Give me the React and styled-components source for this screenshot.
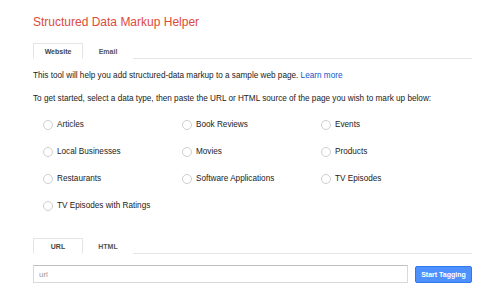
import React, { useState } from "react";
import styled, { createGlobalStyle } from "styled-components";

const GlobalStyle = createGlobalStyle`
  html, body {
    margin: 0;
    padding: 0;
    background: #fff;
  }
  body {
    font-family: "Liberation Sans", Arial, sans-serif;
    color: #222;
  }
`;

const Page = styled.div`
  width: 500px;
  height: 302px;
  box-sizing: border-box;
  padding: 13px 28px 0 33px;
  overflow: hidden;
`;

const Title = styled.h1`
  margin: 0;
  font-size: 12px;
  font-weight: 400;
  line-height: 18px;
  color: #dd4b39;
`;

const TabBar = styled.div`
  display: flex;
  border-bottom: 1px solid #e5e5e5;
  margin-top: ${p => p.$top}px;
`;

const Tab = styled.div`
  width: 50px;
  height: 16px;
  box-sizing: border-box;
  margin-bottom: -1px;
  display: flex;
  align-items: center;
  justify-content: center;
  font-size: 7px;
  font-weight: 700;
  color: ${p => (p.$active ? "#444" : "#555")};
  background: #fff;
  border: 1px solid ${p => (p.$active ? "#e5e5e5" : "transparent")};
  border-bottom-color: ${p => (p.$active ? "#fff" : "transparent")};
  cursor: pointer;
`;

const Para = styled.p`
  margin: ${p => p.$top}px 0 0;
  font-size: 8.2px;
  line-height: 11px;
`;

const Link = styled.a`
  color: #1155cc;
  text-decoration: none;
`;

const Grid = styled.div`
  display: grid;
  grid-template-columns: 139px 139px 1fr;
  row-gap: 16px;
  margin: 15px 0 0 10px;
`;

const Option = styled.label`
  display: flex;
  align-items: center;
  gap: 4px;
  font-size: 8.2px;
  line-height: 11px;
  cursor: pointer;
`;

const Radio = styled.span`
  width: 10px;
  height: 10px;
  box-sizing: border-box;
  border-radius: 50%;
  border: 1px solid ${p => (p.$checked ? "#4d90fe" : "#cfcfcf")};
  background: ${p => (p.$checked ? "radial-gradient(#4d90fe 35%, #fff 40%)" : "#fff")};
  flex-shrink: 0;
`;

const InputRow = styled.div`
  display: flex;
  gap: 7px;
  margin-top: 11px;
`;

const UrlInput = styled.input`
  width: 375px;
  height: 18px;
  box-sizing: border-box;
  border: 1px solid #d9d9d9;
  border-top-color: #c0c0c0;
  padding: 0 5px;
  font-family: "Liberation Sans", Arial, sans-serif;
  font-size: 8px;
  outline: none;
  &::placeholder {
    color: #999;
  }
`;

const Button = styled.button`
  width: 57px;
  height: 17px;
  margin-top: 1px;
  box-sizing: border-box;
  border: 1px solid #3079ed;
  border-radius: 2px;
  background: #4d90fe;
  color: #fff;
  font-family: "Liberation Sans", Arial, sans-serif;
  font-size: 7px;
  font-weight: 700;
  padding: 0;
  cursor: pointer;
`;

const types = [
  "Articles", "Book Reviews", "Events",
  "Local Businesses", "Movies", "Products",
  "Restaurants", "Software Applications", "TV Episodes",
  "TV Episodes with Ratings",
];

export default function App() {
  const [source, setSource] = useState("Website");
  const [input, setInput] = useState("URL");
  const [picked, setPicked] = useState(null);

  return (
    <>
      <GlobalStyle />
      <Page>
        <Title>Structured Data Markup Helper</Title>
        <TabBar $top={12}>
          {["Website", "Email"].map(t => (
            <Tab key={t} $active={source === t} onClick={() => setSource(t)}>{t}</Tab>
          ))}
        </TabBar>
        <Para $top={11}>
          This tool will help you add structured-data markup to a sample web page. <Link href="#">Learn more</Link>
        </Para>
        <Para $top={12}>
          To get started, select a data type, then paste the URL or HTML source of the page you wish to mark up below:
        </Para>
        <Grid>
          {types.map(t => (
            <Option key={t} onClick={() => setPicked(t)}>
              <Radio $checked={picked === t} />
              {t}
            </Option>
          ))}
        </Grid>
        <TabBar $top={27}>
          {["URL", "HTML"].map(t => (
            <Tab key={t} $active={input === t} onClick={() => setInput(t)}>{t}</Tab>
          ))}
        </TabBar>
        <InputRow>
          <UrlInput placeholder="url" />
          <Button>Start Tagging</Button>
        </InputRow>
      </Page>
    </>
  );
}
